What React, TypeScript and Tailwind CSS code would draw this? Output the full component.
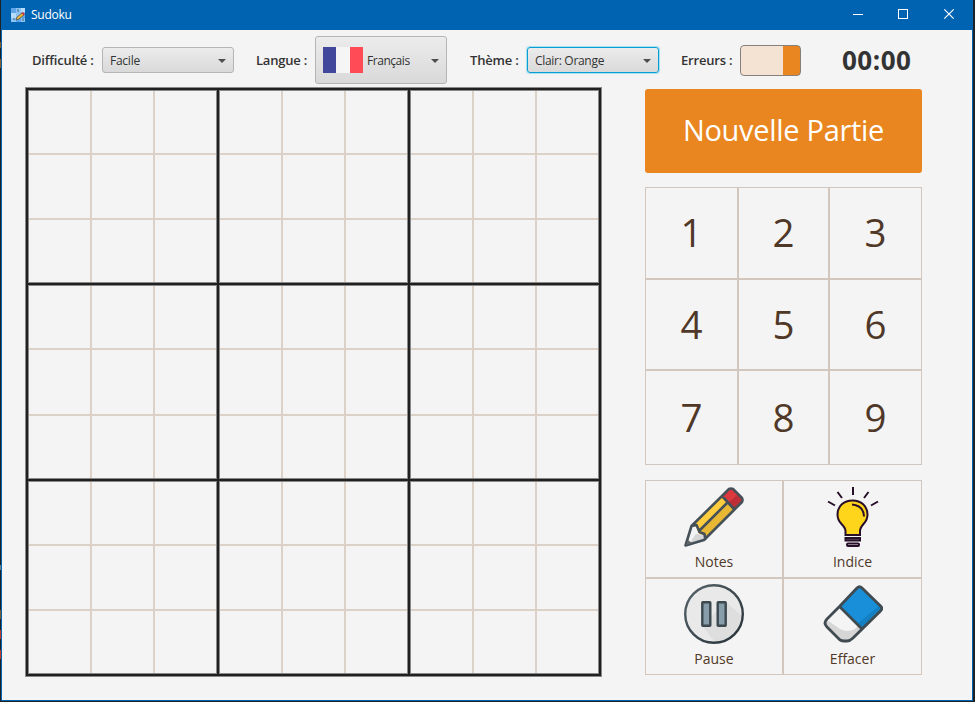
import type { ReactNode } from 'react';

const blockRows = [
  'grid-rows-[62px_63px_62px]',
  'grid-rows-[62px_64px_62px]',
  'grid-rows-[62px_63px_62px]',
];

function AppIcon() {
  return (
    <svg viewBox="0 0 14 14" className="h-[14px] w-[14px]">
      <rect width="14" height="14" fill="#8cc3f5" />
      <path d="M0 0h5v5H0zM10 5h4v5h-4zM5 10h5v4H5z" fill="#5ea5ec" />
      <path d="M0 5h5v5H0zM10 0h4v4h-4z" fill="#b5dcfb" />
      <path d="M7 1v3M2 11h2M12 10v3" stroke="#41668c" />
      <path d="M5 12l1-3 5-4 2 2-5 4z" fill="#e8b83a" stroke="#59514b" strokeWidth=".8" />
      <path d="M10.500 5l1.500-1 2 2-1.400 1.500z" fill="#cf3540" />
    </svg>
  );
}

function TitleBar() {
  return (
    <header className="flex h-[30px] items-center bg-[#0063b1] pl-[9px] text-white">
      <AppIcon />
      <span className="ml-[6px] text-[12px] tracking-[-0.25px]">Sudoku</span>
      <svg viewBox="0 0 104 12" className="mr-[16px] ml-auto h-[12px] w-[104px] -translate-y-px" fill="none" stroke="white">
        <path d="M1 6.500h10" />
        <rect x="46.500" y="1.500" width="9" height="9" />
        <path d="M92.300 1.300l9.400 9.400M101.700 1.300l-9.400 9.400" strokeWidth="1.200" />
      </svg>
    </header>
  );
}

function Select({ children, className }: { children: ReactNode; className: string }) {
  return (
    <button
      className={`flex w-[132px] items-center rounded-[3px] border bg-linear-to-b from-[#ececec] to-[#d9d9d9] pr-[7px] pl-[7px] text-[12px] text-[#333] ${className}`}
    >
      {children}
      <svg viewBox="0 0 8 4" className="mt-px ml-auto h-[4px] w-[8px]">
        <path d="M0 0h8L4 4z" fill="#4d4d4d" />
      </svg>
    </button>
  );
}

function Label({ children, className }: { children: ReactNode; className: string }) {
  return (
    <span className={`shrink-0 pt-[2px] text-[13px] font-semibold whitespace-nowrap text-[#333] ${className}`}>
      {children}
    </span>
  );
}

function Toolbar() {
  return (
    <div className="flex h-[57px] items-center pt-[3px] pl-[30px]">
      <Label className="w-[70px] tracking-[-0.2px]">Difficulté :</Label>
      <Select className="h-[26px] border-[#b5b5b5]">
        <span className="pt-[2px] tracking-[-0.25px]">Facile</span>
      </Select>
      <Label className="ml-[22px] w-[59px] tracking-[-0.2px]">Langue :</Label>
      <Select className="h-[48px] border-[#b5b5b5]">
        <span className="grid h-[26px] w-[40px] grid-cols-[13px_14px_13px]">
          <span className="bg-[#41479b]" />
          <span className="bg-[#f5f5f5]" />
          <span className="bg-[#ff4b55]" />
        </span>
        <span className="ml-[4px] pt-[2px] tracking-[-0.45px]">Français</span>
      </Select>
      <Label className="ml-[23px] w-[57px] tracking-[-0.2px]">Thème :</Label>
      <Select className="h-[26px] border-[#039ed3] shadow-[0_0_1px_1px_#a8dcee]">
        <span className="pt-[2px] tracking-[-0.3px]">Clair: Orange</span>
      </Select>
      <Label className="ml-[22px] w-[59px] tracking-[-0.2px]">Erreurs :</Label>
      <div className="grid h-[31px] w-[61px] rounded-[4px] border border-[#858079] bg-linear-to-r from-[#f4e3d3] from-[42px] to-[#e98620] to-[42px]" />
      <span className="ml-[41px] text-[26px] font-bold tracking-[0.5px] text-[#333]">00:00</span>
    </div>
  );
}

function Board() {
  return (
    <div className="grid h-[590px] w-[577px] grid-cols-3 grid-rows-[193px_194px_193px] gap-[2px] border border-[#898989] bg-[#202020] p-[2px]">
      {Array.from({ length: 9 }, (_, block) => (
        <div
          key={block}
          className={`grid grid-cols-3 gap-[2px] border border-[#898989] bg-[#dbd1c7] ${blockRows[Math.floor(block / 3)]}`}
        >
          {Array.from({ length: 9 }, (_, cell) => (
            <div key={cell} className="bg-[#f4f4f4]" />
          ))}
        </div>
      ))}
    </div>
  );
}

function PencilIcon() {
  return (
    <svg viewBox="0 0 60 60" className="h-[60px] w-[60px]" strokeLinejoin="round">
      <path d="M7 39L38 8l7-6h3l9 9v4l-7 7-31 31z" fill="#ffcd3e" />
      <path d="M14 46L43 15l7 7-30 31z" fill="#e8b835" />
      <path d="M38 10l7-8h3l10 10v3l-8 8z" fill="#dc393f" />
      <path d="M44 16l9-8 5 5-8 9z" fill="#bd2e36" />
      <path d="M7.500 39.500l5 0 2 7 6 2v5L2 58z" fill="#f3f3f3" />
      <path d="M12 47l8 1v5L5 57z" fill="#d5d5d5" />
      <path d="M7.500 39L38 9l7-7q2-1 4 0l9 9q1 2 0 4l-8 8-30 30L1.500 58.500zM38 9l12 13M15 44l28-28M7.500 39l5-1 3 7 5 2 1 6" fill="none" stroke="#455058" strokeWidth="2.600" />
      <path d="M2 58l2-5 4 3z" fill="#626867" />
    </svg>
  );
}

function BulbIcon() {
  return (
    <svg viewBox="0 0 60 60" className="h-[60px] w-[60px]" fill="none" stroke="#270f29" strokeWidth="2">
      <path d="M22.500 48V44q0-3-4-7-4-4-4-9.500C14.500 19 21 13.500 29.500 13.500S44.500 19 44.500 27.500q0 5.500-4 9.500-3.500 4-3.500 7v4z" fill="#ffd51c" />
      <path d="M29 17.500q11.500 1 12 12" />
      <path d="M30 0v8M14.500 5l4.500 6M45.500 5L41 11M5 14.500l7 4M55 14.500l-7 4" />
      <rect x="22.500" y="51" width="14.500" height="2.500" fill="#666066" />
      <rect x="24" y="56.500" width="12" height="2.500" rx="1" fill="#eee" />
    </svg>
  );
}

function PauseIcon() {
  return (
    <svg viewBox="0 0 60 60" className="h-[60px] w-[60px]">
      <defs>
        <linearGradient id="rim" x1="0" y1="0" x2="1" y2="1">
          <stop stopColor="#57646b" />
          <stop offset="1" stopColor="#263137" />
        </linearGradient>
      </defs>
      <circle cx="30" cy="30" r="28.800" fill="#e9e9e9" />
      <path d="M18 42L42 18l16 14a28 28 0 0 1-27 26z" fill="#dedede" />
      <circle cx="30" cy="30" r="28.800" fill="none" stroke="url(#rim)" strokeWidth="2.400" />
      <rect x="18.300" y="18.300" width="8" height="23.400" rx=".5" fill="#879daa" stroke="#3c494f" strokeWidth="2.400" />
      <rect x="33.700" y="18.300" width="8" height="23.400" rx=".5" fill="#879daa" stroke="#3c494f" strokeWidth="2.400" />
    </svg>
  );
}

function EraserIcon() {
  return (
    <svg viewBox="0 0 60 60" className="h-[60px] w-[60px]" strokeLinejoin="round">
      <path d="M16.500 22.500L34 4q2.500-2 5 0l18.500 18q2 2 0 4.500L39 45z" fill="#188fd8" />
      <path d="M34 40l22-18 2 2v2L39 45z" fill="#1280c3" />
      <path d="M16.500 22.500L39 45l-9 9q-2 3-6 3h-3q-4 0-6-3L4 43q-3-4-1-7z" fill="#f4f4f4" />
      <path d="M4 36l13 9q7 4 15 0l3-3 3 4-12 11H18L3 41z" fill="#d6d6d6" />
      <path d="M16.500 22.500L34 4q2.500-2.500 5 0l18.500 18q2.500 2.500 0 5L30 54q-3 3-6 3h-3q-4 0-6-3L4 43q-4-4 0-8zM16.500 22.500L39 45" fill="none" stroke="#3f4b51" strokeWidth="2.800" />
    </svg>
  );
}

const actions = [
  { label: 'Notes', icon: <PencilIcon />, pad: 'pt-[6px]' },
  { label: 'Indice', icon: <BulbIcon />, pad: 'pt-[6px]' },
  { label: 'Pause', icon: <PauseIcon />, pad: 'pt-[5px]' },
  { label: 'Effacer', icon: <EraserIcon />, pad: 'pt-[5px]' },
];

function Controls() {
  return (
    <div className="ml-[43px] flex w-[277px] flex-col pt-[2px]">
      <button className="h-[84px] rounded-[3px] bg-[#e98620] pb-[2px] text-[29px] tracking-[-0.3px] text-white">
        Nouvelle Partie
      </button>
      <div className="mt-[14px] grid h-[278px] grid-cols-[93px_91px_93px] grid-rows-[92px_91px_95px]">
        {[1, 2, 3, 4, 5, 6, 7, 8, 9].map((n) => (
          <button key={n} className="border border-[#d3c7bd] text-[38.500px] text-[#503828]">
            {n}
          </button>
        ))}
      </div>
      <div className="mt-[15px] grid h-[195px] grid-cols-[138px_139px] grid-rows-[98px_97px]">
        {actions.map(({ label, icon, pad }) => (
          <button
            key={label}
            className={`flex flex-col items-center border border-[#d3c7bd] text-[14px] text-[#503828] ${pad}`}
          >
            {icon}
            <span className="mt-[5px] leading-[20px]">{label}</span>
          </button>
        ))}
      </div>
    </div>
  );
}

function DesktopEdge() {
  return (
    <div className="flex w-px flex-col">
      <span className="mt-[42px] h-[6px] bg-[#8a5a24]" />
      <span className="mt-[11px] h-[9px] bg-[#8a5a24]" />
      <span className="mt-[497px] h-[5px] bg-[#6a8290]" />
      <span className="mt-[40px] h-[9px] bg-[#7a5a2a]" />
      <span className="mt-[11px] h-[9px] bg-[#c03a25]" />
      <span className="mt-[11px] h-[9px] bg-[#c03a25]" />
    </div>
  );
}

export default function App() {
  return (
    <div className="flex h-[702px] w-[975px] bg-[#202124] pr-[2px] font-['Open_Sans','Noto_Sans',sans-serif]">
      <DesktopEdge />
      <div className="h-[701px] w-[972px] border border-t-0 border-[#0063b1] bg-[#f4f4f4]">
        <TitleBar />
        <Toolbar />
        <main className="flex pl-[23px]">
          <Board />
          <Controls />
        </main>
      </div>
    </div>
  );
}
